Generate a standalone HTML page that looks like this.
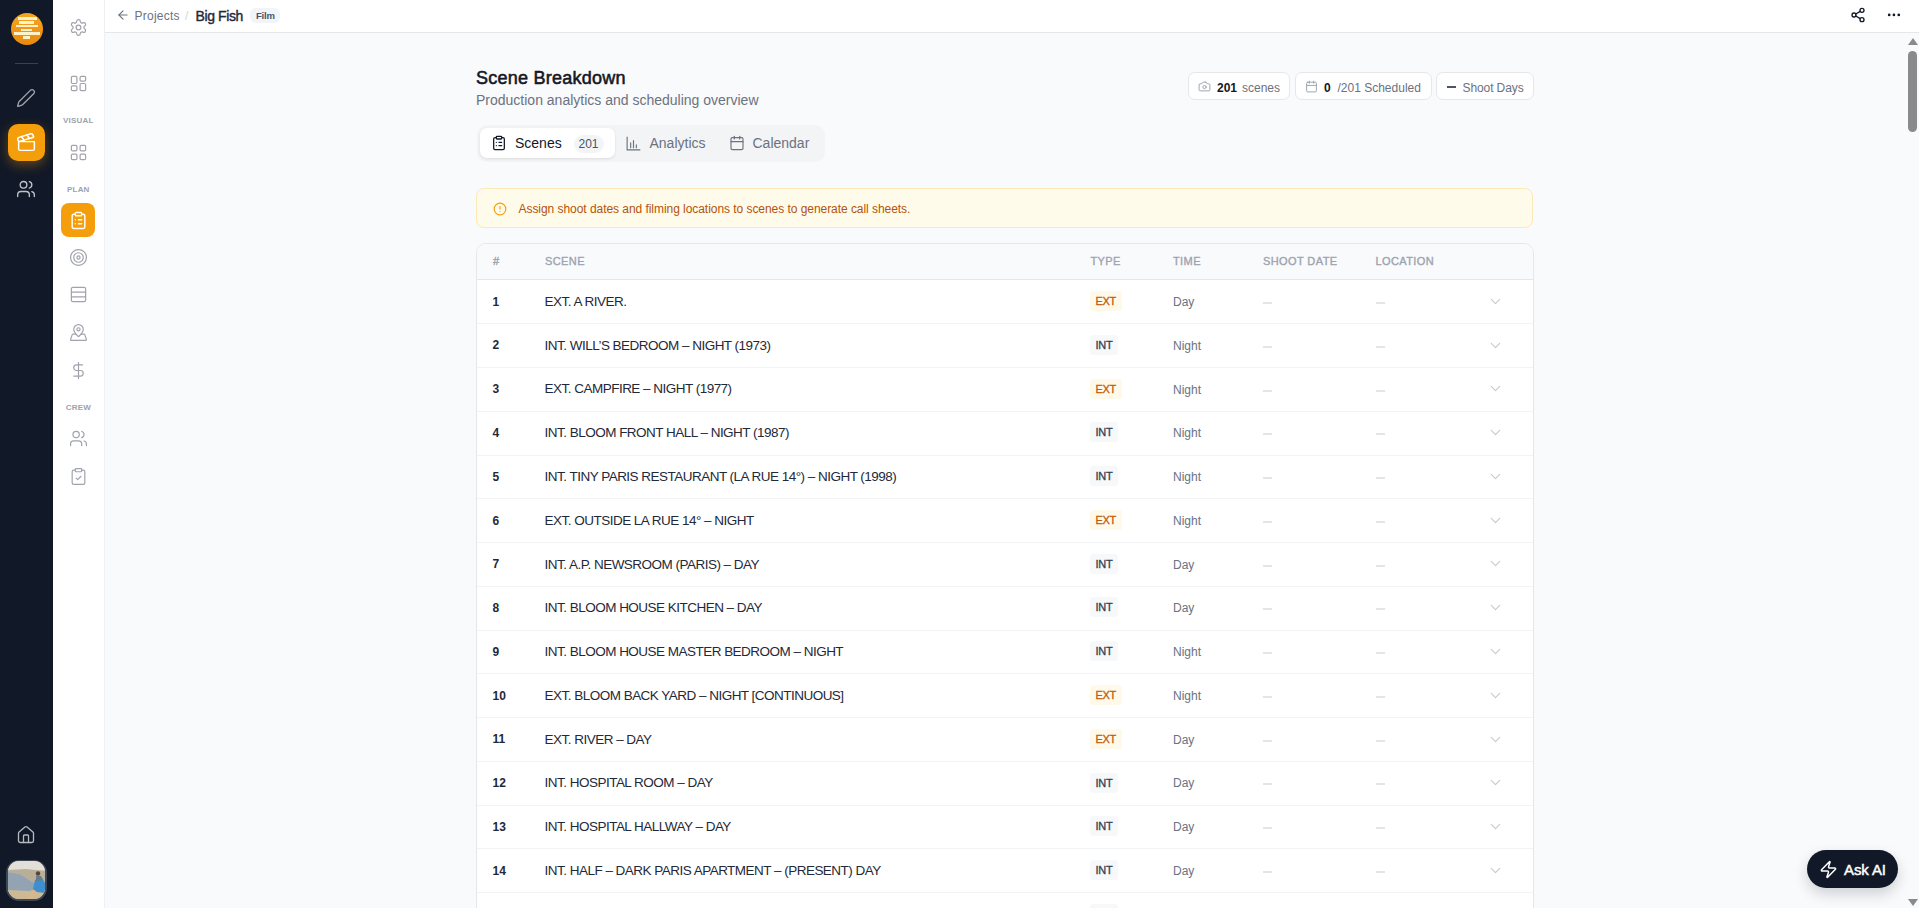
<!DOCTYPE html>
<html><head><meta charset="utf-8">
<style>
*{box-sizing:border-box;margin:0;padding:0}
html,body{width:1919px;height:908px;overflow:hidden;background:#F9FAFB;font-family:"Liberation Sans",sans-serif;color:#111827}
.abs{position:absolute}
svg{display:block}
.ic{position:absolute}
#rail{left:0;top:0;width:53px;height:908px;background:#111827}
#side{left:53px;top:0;width:52px;height:908px;background:#fff;border-right:1px solid #EEF0F3}
#top{left:105px;top:0;width:1814px;height:33px;background:#fff;border-bottom:1px solid #E5E7EB}
.lbl{position:absolute;width:52px;left:-0.7px;text-align:center;font-size:8px;font-weight:bold;color:#9CA3AF;letter-spacing:0.2px;line-height:10px}
.t{position:absolute;white-space:nowrap;line-height:1}
.pill{position:absolute;top:39px;height:27.6px;background:#fff;border:1px solid #E5E7EB;border-radius:7px}
.row{position:absolute;left:0;width:1055px;height:43.8px;border-top:1px solid #F1F3F5;background:#fff}
.row .n{position:absolute;left:16px;top:0;line-height:43.8px;font-size:12px;font-weight:bold;color:#1F2937}
.row .s{position:absolute;left:68px;top:0;line-height:43.8px;font-size:13px;letter-spacing:-0.35px;color:#1F2937;white-space:nowrap}
.row .b{position:absolute;left:613.5px;top:12px;height:20px;line-height:20px;border-radius:4px;font-size:10.5px;font-weight:bold;padding:0 6px;letter-spacing:-0.2px}
.row .b.ext{background:#FEF7E6;color:#C2570C}
.row .b.int{background:#F6F8FA;color:#334155}
.row .tm{position:absolute;left:696.5px;top:0;line-height:43.8px;font-size:12px;color:#6B7280}
.row .d{position:absolute;top:22px;width:9px;height:1px;background:#D9DCE1}
.row .cv{position:absolute;left:1012px;top:15px}
.rn{font-size:12px;font-weight:bold;color:#1F2937}
.rs{font-size:13.5px;letter-spacing:-0.52px;color:#1F2937}
.rb{position:absolute;height:20px;line-height:20px;border-radius:3.5px;font-size:11px;padding:0 5.5px;-webkit-text-stroke:0.3px currentColor;letter-spacing:-0.3px}
.rb.ext{background:#FFF9EA;color:#C25A0C}
.rb.int{background:#F6F8FA;color:#334155}
.rt{font-size:12px;color:#6B7280}
.hd{position:absolute;top:0.7px;line-height:35.5px;font-size:11px;color:#9CA3AF;-webkit-text-stroke:0.35px #9CA3AF;letter-spacing:0.4px}
</style></head><body>

<div id="rail" class="abs">
<div class="abs" style="left:10.8px;top:12.7px;width:32px;height:32px;border-radius:50%;background:linear-gradient(180deg,#F5A623 0%,#EF9416 60%,#E88A0E 100%)"></div>
<div class="abs" style="left:17.6px;top:17.45px;width:19.1px;height:2.4px;background:#FFF1C8"></div>
<div class="abs" style="left:19.4px;top:21.2px;width:14.600000000000001px;height:2.4px;background:#FFF1C8"></div>
<div class="abs" style="left:15.9px;top:24.900000000000002px;width:22.1px;height:2.4px;background:#FFF1C8"></div>
<div class="abs" style="left:21.4px;top:28.6px;width:10.600000000000001px;height:2.4px;background:#FFF1C8"></div>
<div class="abs" style="left:13.9px;top:32.3px;width:26.0px;height:2.4px;background:#FFF1C8"></div>
<div class="abs" style="left:23px;top:36.3px;width:7.300000000000001px;height:2.4px;background:#FFF1C8"></div>
<div class="abs" style="left:15px;top:62.5px;width:23px;height:1px;background:#374151"></div>
<div class="ic" style="left:16.0px;top:88.0px;width:20px;height:20px"><svg width="20" height="20" viewBox="0 0 24 24" fill="none" stroke="#A0A3AB" stroke-width="1.6" stroke-linecap="round" stroke-linejoin="round" ><path d="M21.174 6.812a1 1 0 0 0-3.986-3.987L3.842 16.174a2 2 0 0 0-.5.83l-1.321 4.352a.5.5 0 0 0 .623.622l4.353-1.32a2 2 0 0 0 .83-.497z"/></svg></div>
<div class="abs" style="left:8.2px;top:124px;width:37px;height:37px;border-radius:10px;background:#F59E0B;box-shadow:0 4px 12px rgba(245,158,11,0.35)"></div>
<div class="ic" style="left:15.5px;top:132.0px;width:21px;height:21px"><svg width="21" height="21" viewBox="0 0 24 24" fill="none" stroke="#fff" stroke-width="1.7" stroke-linecap="round" stroke-linejoin="round" ><path d="M20.2 6 3 11l-.9-2.4c-.3-1.1.3-2.2 1.3-2.5l13.5-4c1.1-.3 2.2.3 2.5 1.3Z"/><path d="m6.2 5.3 3.1 3.9"/><path d="m12.4 3.4 3.1 4"/><path d="M3 11h18v8a2 2 0 0 1-2 2H5a2 2 0 0 1-2-2Z"/></svg></div>
<div class="ic" style="left:16.0px;top:178.5px;width:20px;height:20px"><svg width="20" height="20" viewBox="0 0 24 24" fill="none" stroke="#C0C3CA" stroke-width="1.6" stroke-linecap="round" stroke-linejoin="round" ><path d="M16 21v-2a4 4 0 0 0-4-4H6a4 4 0 0 0-4 4v2"/><circle cx="9" cy="7" r="4"/><path d="M22 21v-2a4 4 0 0 0-3-3.87"/><path d="M16 3.13a4 4 0 0 1 0 7.75"/></svg></div>
<div class="ic" style="left:16.0px;top:825.0px;width:20px;height:20px"><svg width="20" height="20" viewBox="0 0 24 24" fill="none" stroke="#B6B9C0" stroke-width="1.6" stroke-linecap="round" stroke-linejoin="round" ><path d="M15 21v-8a1 1 0 0 0-1-1h-4a1 1 0 0 0-1 1v8"/><path d="M3 10a2 2 0 0 1 .709-1.528l7-5.999a2 2 0 0 1 2.582 0l7 5.999A2 2 0 0 1 21 10v9a2 2 0 0 1-2 2H5a2 2 0 0 1-2-2z"/></svg></div>
<div class="abs" style="left:6px;top:859.5px;width:41px;height:41px;border-radius:13px;background:#3F4654"></div>
<svg class="abs" style="left:8px;top:861px" width="37" height="38" viewBox="0 0 37 38"><defs><clipPath id="av"><rect x="0" y="0" width="37" height="38" rx="11"/></clipPath></defs><g clip-path="url(#av)"><rect width="37" height="38" fill="#CFCBC2"/><rect width="37" height="9" fill="#E2DFD8"/><path d="M0 9 L18 8 L37 10 L37 24 L26 22 L12 13 L0 11Z" fill="#B9AE98"/><path d="M0 11 L12 13 L26 22 L30 27 L22 30 L0 31Z" fill="#93A3B1"/><path d="M0 29 L22 30 L30 27 L37 28 L37 38 L0 38Z" fill="#CDB993"/><path d="M24 30 L28 28 L25 38 L20 38Z" fill="#D9B78F"/><path d="M27 19 L34 17 L37 22 L37 32 L29 31 L25 28Z" fill="#3D8FCF"/><circle cx="30" cy="12.5" r="2.2" fill="#5A4535"/><path d="M28 15 L33 15 L35 19 L28 20Z" fill="#6C7A88"/></g></svg>
</div>
<div id="side" class="abs">
<div class="ic" style="left:15.5px;top:17.5px;width:19px;height:19px"><svg width="19" height="19" viewBox="0 0 24 24" fill="none" stroke="#A0A3AB" stroke-width="1.5" stroke-linecap="round" stroke-linejoin="round" ><path d="M12.22 2h-.44a2 2 0 0 0-2 2v.18a2 2 0 0 1-1 1.73l-.43.25a2 2 0 0 1-2 0l-.15-.08a2 2 0 0 0-2.73.73l-.22.38a2 2 0 0 0 .73 2.73l.15.1a2 2 0 0 1 1 1.72v.51a2 2 0 0 1-1 1.74l-.15.09a2 2 0 0 0-.73 2.73l.22.38a2 2 0 0 0 2.73.73l.15-.08a2 2 0 0 1 2 0l.43.25a2 2 0 0 1 1 1.73V20a2 2 0 0 0 2 2h.44a2 2 0 0 0 2-2v-.18a2 2 0 0 1 1-1.73l.43-.25a2 2 0 0 1 2 0l.15.08a2 2 0 0 0 2.73-.73l.22-.39a2 2 0 0 0-.73-2.73l-.15-.08a2 2 0 0 1-1-1.74v-.5a2 2 0 0 1 1-1.74l.15-.09a2 2 0 0 0 .73-2.73l-.22-.38a2 2 0 0 0-2.73-.73l-.15.08a2 2 0 0 1-2 0l-.43-.25a2 2 0 0 1-1-1.73V4a2 2 0 0 0-2-2z"/><circle cx="12" cy="12" r="3"/></svg></div>
<div class="ic" style="left:15.5px;top:73.5px;width:19px;height:19px"><svg width="19" height="19" viewBox="0 0 24 24" fill="none" stroke="#A0A3AB" stroke-width="1.5" stroke-linecap="round" stroke-linejoin="round" ><rect x="3" y="3" width="7" height="9" rx="1.5"/><rect x="14" y="3" width="7" height="6" rx="1.5"/><rect x="14" y="12" width="7" height="9" rx="1.5"/><rect x="3" y="15" width="7" height="6" rx="1.5"/></svg></div>
<div class="lbl" style="top:116px">VISUAL</div>
<div class="ic" style="left:15.5px;top:142.5px;width:19px;height:19px"><svg width="19" height="19" viewBox="0 0 24 24" fill="none" stroke="#A0A3AB" stroke-width="1.5" stroke-linecap="round" stroke-linejoin="round" ><rect x="3" y="3" width="7" height="7" rx="1.5"/><rect x="14" y="3" width="7" height="7" rx="1.5"/><rect x="14" y="14" width="7" height="7" rx="1.5"/><rect x="3" y="14" width="7" height="7" rx="1.5"/></svg></div>
<div class="lbl" style="top:185px">PLAN</div>
<div class="abs" style="left:8px;top:203px;width:34px;height:34px;border-radius:8px;background:#F59E0B"></div>
<div class="ic" style="left:15.5px;top:210.5px;width:19px;height:19px"><svg width="19" height="19" viewBox="0 0 24 24" fill="none" stroke="#fff" stroke-width="1.8" stroke-linecap="round" stroke-linejoin="round" ><rect x="8" y="2" width="8" height="4" rx="1"/><path d="M16 4h2a2 2 0 0 1 2 2v14a2 2 0 0 1-2 2H6a2 2 0 0 1-2-2V6a2 2 0 0 1 2-2h2"/><path d="M12 11h4"/><path d="M12 16h4"/><path d="M8 11h.01"/><path d="M8 16h.01"/></svg></div>
<div class="ic" style="left:15.5px;top:247.5px;width:19px;height:19px"><svg width="19" height="19" viewBox="0 0 24 24" fill="none" stroke="#A0A3AB" stroke-width="1.5" stroke-linecap="round" stroke-linejoin="round" ><circle cx="12" cy="12" r="10"/><circle cx="12" cy="12" r="6"/><circle cx="12" cy="12" r="2"/></svg></div>
<div class="ic" style="left:15.5px;top:285.0px;width:19px;height:19px"><svg width="19" height="19" viewBox="0 0 24 24" fill="none" stroke="#A0A3AB" stroke-width="1.5" stroke-linecap="round" stroke-linejoin="round" ><rect x="3" y="3" width="18" height="18" rx="2"/><path d="M21 9H3"/><path d="M21 15H3"/></svg></div>
<div class="ic" style="left:15.5px;top:322.5px;width:19px;height:19px"><svg width="19" height="19" viewBox="0 0 24 24" fill="none" stroke="#A0A3AB" stroke-width="1.5" stroke-linecap="round" stroke-linejoin="round" ><path d="M18 8c0 3.613-3.869 7.429-5.393 8.795a1 1 0 0 1-1.214 0C9.87 15.429 6 11.613 6 8a6 6 0 0 1 12 0"/><circle cx="12" cy="8" r="2"/><path d="M8.714 14h-3.71a1 1 0 0 0-.948.683l-2.004 6A1 1 0 0 0 3 22h18a1 1 0 0 0 .948-1.316l-2-6a1 1 0 0 0-.949-.684h-3.712"/></svg></div>
<div class="ic" style="left:15.5px;top:360.5px;width:19px;height:19px"><svg width="19" height="19" viewBox="0 0 24 24" fill="none" stroke="#A0A3AB" stroke-width="1.5" stroke-linecap="round" stroke-linejoin="round" ><line x1="12" x2="12" y1="2" y2="22"/><path d="M17 5H9.5a3.5 3.5 0 0 0 0 7h5a3.5 3.5 0 0 1 0 7H6"/></svg></div>
<div class="lbl" style="top:403px">CREW</div>
<div class="ic" style="left:15.5px;top:428.5px;width:19px;height:19px"><svg width="19" height="19" viewBox="0 0 24 24" fill="none" stroke="#A0A3AB" stroke-width="1.5" stroke-linecap="round" stroke-linejoin="round" ><path d="M16 21v-2a4 4 0 0 0-4-4H6a4 4 0 0 0-4 4v2"/><circle cx="9" cy="7" r="4"/><path d="M22 21v-2a4 4 0 0 0-3-3.87"/><path d="M16 3.13a4 4 0 0 1 0 7.75"/></svg></div>
<div class="ic" style="left:15.5px;top:466.5px;width:19px;height:19px"><svg width="19" height="19" viewBox="0 0 24 24" fill="none" stroke="#A0A3AB" stroke-width="1.5" stroke-linecap="round" stroke-linejoin="round" ><rect x="8" y="2" width="8" height="4" rx="1"/><path d="M16 4h2a2 2 0 0 1 2 2v14a2 2 0 0 1-2 2H6a2 2 0 0 1-2-2V6a2 2 0 0 1 2-2h2"/><path d="m9 14 2 2 4-4"/></svg></div>
</div>
<div id="top" class="abs">
<div class="ic" style="left:11.0px;top:8.0px;width:14px;height:14px"><svg width="14" height="14" viewBox="0 0 24 24" fill="none" stroke="#6B7280" stroke-width="1.9" stroke-linecap="round" stroke-linejoin="round" ><path d="m12 19-7-7 7-7"/><path d="M19 12H5"/></svg></div>
<div class="t" style="left:29.5px;top:9.5px;font-size:12px;color:#6B7280;letter-spacing:0.25px">Projects</div>
<div class="t" style="left:80px;top:9.5px;font-size:12px;color:#D1D5DB">/</div>
<div class="t" style="left:90.5px;top:8.5px;font-size:14px;color:#1F2937;-webkit-text-stroke:0.4px #1F2937;letter-spacing:-0.4px">Big Fish</div>
<div class="abs" style="left:145px;top:8px;width:30px;height:15px;border-radius:6px;background:#F1F5F9"></div>
<div class="t" style="left:151px;top:11px;font-size:9.5px;font-weight:bold;color:#475569;letter-spacing:-0.2px">Film</div>
<div class="ic" style="left:1745.0px;top:6.5px;width:16px;height:16px"><svg width="16" height="16" viewBox="0 0 24 24" fill="none" stroke="#111827" stroke-width="2" stroke-linecap="round" stroke-linejoin="round" ><circle cx="18" cy="5" r="3"/><circle cx="6" cy="12" r="3"/><circle cx="18" cy="19" r="3"/><line x1="8.59" x2="15.42" y1="13.51" y2="17.49"/><line x1="15.41" x2="8.59" y1="6.51" y2="10.49"/></svg></div>
<svg class="abs" style="left:1781px;top:9px" width="20" height="12" viewBox="0 0 20 12"><circle cx="3.2" cy="5.9" r="1.35" fill="#111827"/><circle cx="7.9" cy="5.9" r="1.35" fill="#111827"/><circle cx="12.8" cy="5.9" r="1.35" fill="#111827"/></svg>
</div>
<div class="abs" style="left:476px;top:33px;width:1057px;height:875px">
<div class="t" style="left:0;top:36px;font-size:18px;color:#111827;-webkit-text-stroke:0.55px #111827;letter-spacing:0.25px">Scene Breakdown</div>
<div class="t" style="left:0;top:60px;font-size:14px;color:#6B7280">Production analytics and scheduling overview</div>
<div class="abs" style="left:1px;top:91.5px;width:348px;height:37px;border-radius:10px;background:#F2F4F6"></div>
<div class="abs" style="left:4px;top:95px;width:135px;height:30px;border-radius:7px;background:#fff;box-shadow:0 1px 3px rgba(0,0,0,0.10)"></div>
<div class="ic" style="left:15.0px;top:102.0px;width:16px;height:16px"><svg width="16" height="16" viewBox="0 0 24 24" fill="none" stroke="#111827" stroke-width="1.9" stroke-linecap="round" stroke-linejoin="round" ><rect x="8" y="2" width="8" height="4" rx="1"/><path d="M16 4h2a2 2 0 0 1 2 2v14a2 2 0 0 1-2 2H6a2 2 0 0 1-2-2V6a2 2 0 0 1 2-2h2"/><path d="M12 11h4"/><path d="M12 16h4"/><path d="M8 11h.01"/><path d="M8 16h.01"/></svg></div>
<div class="t" style="left:39px;top:102.8px;font-size:14px;color:#111827">Scenes</div>
<div class="abs" style="left:97.5px;top:101.5px;width:30px;height:18px;border-radius:9px;background:#F3F4F6"></div>
<div class="t" style="left:102.5px;top:105px;font-size:12px;color:#4B5563">201</div>
<div class="ic" style="left:149.0px;top:101.5px;width:17px;height:17px"><svg width="17" height="17" viewBox="0 0 24 24" fill="none" stroke="#6B7280" stroke-width="1.6" stroke-linecap="round" stroke-linejoin="round" ><path d="M3 3v18h18"/><path d="M8 18V11"/><path d="M12 18V8"/><path d="M16 18v-4"/></svg></div>
<div class="t" style="left:173.5px;top:102.8px;font-size:14px;color:#6B7280">Analytics</div>
<div class="ic" style="left:253.0px;top:102.0px;width:16px;height:16px"><svg width="16" height="16" viewBox="0 0 24 24" fill="none" stroke="#6B7280" stroke-width="1.7" stroke-linecap="round" stroke-linejoin="round" ><rect width="18" height="18" x="3" y="4" rx="2"/><path d="M16 2v4"/><path d="M8 2v4"/><path d="M3 10h18"/></svg></div>
<div class="t" style="left:276.5px;top:102.8px;font-size:14px;color:#6B7280">Calendar</div>
<div class="pill" style="left:712px;width:102px"></div>
<div class="ic" style="left:722.0px;top:47.0px;width:13px;height:13px"><svg width="13" height="13" viewBox="0 0 24 24" fill="none" stroke="#9CA3AF" stroke-width="1.8" stroke-linecap="round" stroke-linejoin="round" ><path d="M14.5 4h-5L7 7H4a2 2 0 0 0-2 2v9a2 2 0 0 0 2 2h16a2 2 0 0 0 2-2V9a2 2 0 0 0-2-2h-3l-2.5-3z"/><circle cx="12" cy="13" r="3"/></svg></div>
<div class="t" style="left:741px;top:48.5px;font-size:12px;font-weight:bold;color:#111827">201</div>
<div class="t" style="left:766px;top:48.5px;font-size:12px;color:#6B7280">scenes</div>
<div class="pill" style="left:818.5px;width:137px"></div>
<div class="ic" style="left:829.0px;top:47.0px;width:13px;height:13px"><svg width="13" height="13" viewBox="0 0 24 24" fill="none" stroke="#9CA3AF" stroke-width="1.8" stroke-linecap="round" stroke-linejoin="round" ><rect width="18" height="18" x="3" y="4" rx="2"/><path d="M16 2v4"/><path d="M8 2v4"/><path d="M3 10h18"/></svg></div>
<div class="t" style="left:848px;top:48.5px;font-size:12px;font-weight:bold;color:#111827">0</div>
<div class="t" style="left:861.5px;top:48.5px;font-size:12px;color:#6B7280">/201 Scheduled</div>
<div class="pill" style="left:960px;width:98px"></div>
<div class="abs" style="left:970.5px;top:53px;width:9px;height:1.6px;background:#4B5563"></div>
<div class="t" style="left:986.5px;top:48.5px;font-size:12px;color:#6B7280;letter-spacing:-0.1px">Shoot Days</div>
<div class="abs" style="left:0;top:155px;width:1057px;height:40px;border-radius:8px;background:#FFFBEB;border:1px solid #FDE9B5"></div>
<div class="ic" style="left:16.5px;top:168.8px;width:14px;height:14px"><svg width="14" height="14" viewBox="0 0 24 24" fill="none" stroke="#F59E0B" stroke-width="2" stroke-linecap="round" stroke-linejoin="round" ><circle cx="12" cy="12" r="10"/><line x1="12" x2="12" y1="8" y2="12"/><line x1="12" x2="12.01" y1="16" y2="16"/></svg></div>
<div class="t" style="left:42.5px;top:169.5px;font-size:12px;color:#B45309;letter-spacing:-0.05px">Assign shoot dates and filming locations to scenes to generate call sheets.</div>
</div>
<div class="abs" style="left:476px;top:242.6px;width:1058px;height:700px;border-radius:10px;border:1px solid #E5E7EB;background:#fff;overflow:hidden">
<div class="abs" style="left:0;top:0;width:1056px;height:36.4px;background:#F9FAFB;border-bottom:1px solid #E5E7EB"></div>
<div class="hd" style="left:16px">#</div>
<div class="hd" style="left:68px">SCENE</div>
<div class="hd" style="left:613.5px">TYPE</div>
<div class="hd" style="left:696px">TIME</div>
<div class="hd" style="left:786px">SHOOT DATE</div>
<div class="hd" style="left:898.5px">LOCATION</div>
</div>
<div class="abs" style="left:477px;top:323.20px;width:1056px;height:1px;background:#F1F3F5"></div>
<div class="t rn" style="left:492.5px;top:295.70px">1</div>
<div class="t rs" style="left:544.6px;top:294.90px">EXT. A RIVER.</div>
<div class="rb ext" style="left:1090px;top:291.10px">EXT</div>
<div class="t rt" style="left:1173px;top:296.00px">Day</div>
<div class="abs" style="left:1263px;top:302px;width:9px;height:2px;background:#E3E5E8"></div>
<div class="abs" style="left:1375.5px;top:302px;width:9px;height:2px;background:#E3E5E8"></div>
<div class="ic" style="left:1487.2px;top:292.8px;width:17px;height:17px"><svg width="17" height="17" viewBox="0 0 24 24" fill="none" stroke="#C4C8CE" stroke-width="1.5" stroke-linecap="round" stroke-linejoin="round" ><path d="m6 9 6 6 6-6"/></svg></div>
<div class="abs" style="left:477px;top:366.97px;width:1056px;height:1px;background:#F1F3F5"></div>
<div class="t rn" style="left:492.5px;top:339.47px">2</div>
<div class="t rs" style="left:544.6px;top:338.67px">INT. WILL’S BEDROOM – NIGHT (1973)</div>
<div class="rb int" style="left:1090px;top:334.87px">INT</div>
<div class="t rt" style="left:1173px;top:339.77px">Night</div>
<div class="abs" style="left:1263px;top:346px;width:9px;height:2px;background:#E3E5E8"></div>
<div class="abs" style="left:1375.5px;top:346px;width:9px;height:2px;background:#E3E5E8"></div>
<div class="ic" style="left:1487.2px;top:336.57px;width:17px;height:17px"><svg width="17" height="17" viewBox="0 0 24 24" fill="none" stroke="#C4C8CE" stroke-width="1.5" stroke-linecap="round" stroke-linejoin="round" ><path d="m6 9 6 6 6-6"/></svg></div>
<div class="abs" style="left:477px;top:410.74px;width:1056px;height:1px;background:#F1F3F5"></div>
<div class="t rn" style="left:492.5px;top:383.24px">3</div>
<div class="t rs" style="left:544.6px;top:382.44px">EXT. CAMPFIRE – NIGHT (1977)</div>
<div class="rb ext" style="left:1090px;top:378.64px">EXT</div>
<div class="t rt" style="left:1173px;top:383.54px">Night</div>
<div class="abs" style="left:1263px;top:390px;width:9px;height:2px;background:#E3E5E8"></div>
<div class="abs" style="left:1375.5px;top:390px;width:9px;height:2px;background:#E3E5E8"></div>
<div class="ic" style="left:1487.2px;top:380.34000000000003px;width:17px;height:17px"><svg width="17" height="17" viewBox="0 0 24 24" fill="none" stroke="#C4C8CE" stroke-width="1.5" stroke-linecap="round" stroke-linejoin="round" ><path d="m6 9 6 6 6-6"/></svg></div>
<div class="abs" style="left:477px;top:454.51px;width:1056px;height:1px;background:#F1F3F5"></div>
<div class="t rn" style="left:492.5px;top:427.01px">4</div>
<div class="t rs" style="left:544.6px;top:426.21px">INT. BLOOM FRONT HALL – NIGHT (1987)</div>
<div class="rb int" style="left:1090px;top:422.41px">INT</div>
<div class="t rt" style="left:1173px;top:427.31px">Night</div>
<div class="abs" style="left:1263px;top:433px;width:9px;height:2px;background:#E3E5E8"></div>
<div class="abs" style="left:1375.5px;top:433px;width:9px;height:2px;background:#E3E5E8"></div>
<div class="ic" style="left:1487.2px;top:424.11px;width:17px;height:17px"><svg width="17" height="17" viewBox="0 0 24 24" fill="none" stroke="#C4C8CE" stroke-width="1.5" stroke-linecap="round" stroke-linejoin="round" ><path d="m6 9 6 6 6-6"/></svg></div>
<div class="abs" style="left:477px;top:498.28px;width:1056px;height:1px;background:#F1F3F5"></div>
<div class="t rn" style="left:492.5px;top:470.78px">5</div>
<div class="t rs" style="left:544.6px;top:469.98px">INT. TINY PARIS RESTAURANT (LA RUE 14°) – NIGHT (1998)</div>
<div class="rb int" style="left:1090px;top:466.18px">INT</div>
<div class="t rt" style="left:1173px;top:471.08px">Night</div>
<div class="abs" style="left:1263px;top:477px;width:9px;height:2px;background:#E3E5E8"></div>
<div class="abs" style="left:1375.5px;top:477px;width:9px;height:2px;background:#E3E5E8"></div>
<div class="ic" style="left:1487.2px;top:467.88px;width:17px;height:17px"><svg width="17" height="17" viewBox="0 0 24 24" fill="none" stroke="#C4C8CE" stroke-width="1.5" stroke-linecap="round" stroke-linejoin="round" ><path d="m6 9 6 6 6-6"/></svg></div>
<div class="abs" style="left:477px;top:542.05px;width:1056px;height:1px;background:#F1F3F5"></div>
<div class="t rn" style="left:492.5px;top:514.55px">6</div>
<div class="t rs" style="left:544.6px;top:513.75px">EXT. OUTSIDE LA RUE 14° – NIGHT</div>
<div class="rb ext" style="left:1090px;top:509.95px">EXT</div>
<div class="t rt" style="left:1173px;top:514.85px">Night</div>
<div class="abs" style="left:1263px;top:521px;width:9px;height:2px;background:#E3E5E8"></div>
<div class="abs" style="left:1375.5px;top:521px;width:9px;height:2px;background:#E3E5E8"></div>
<div class="ic" style="left:1487.2px;top:511.6500000000001px;width:17px;height:17px"><svg width="17" height="17" viewBox="0 0 24 24" fill="none" stroke="#C4C8CE" stroke-width="1.5" stroke-linecap="round" stroke-linejoin="round" ><path d="m6 9 6 6 6-6"/></svg></div>
<div class="abs" style="left:477px;top:585.82px;width:1056px;height:1px;background:#F1F3F5"></div>
<div class="t rn" style="left:492.5px;top:558.32px">7</div>
<div class="t rs" style="left:544.6px;top:557.52px">INT. A.P. NEWSROOM (PARIS) – DAY</div>
<div class="rb int" style="left:1090px;top:553.72px">INT</div>
<div class="t rt" style="left:1173px;top:558.62px">Day</div>
<div class="abs" style="left:1263px;top:565px;width:9px;height:2px;background:#E3E5E8"></div>
<div class="abs" style="left:1375.5px;top:565px;width:9px;height:2px;background:#E3E5E8"></div>
<div class="ic" style="left:1487.2px;top:555.4200000000001px;width:17px;height:17px"><svg width="17" height="17" viewBox="0 0 24 24" fill="none" stroke="#C4C8CE" stroke-width="1.5" stroke-linecap="round" stroke-linejoin="round" ><path d="m6 9 6 6 6-6"/></svg></div>
<div class="abs" style="left:477px;top:629.59px;width:1056px;height:1px;background:#F1F3F5"></div>
<div class="t rn" style="left:492.5px;top:602.09px">8</div>
<div class="t rs" style="left:544.6px;top:601.29px">INT. BLOOM HOUSE KITCHEN – DAY</div>
<div class="rb int" style="left:1090px;top:597.49px">INT</div>
<div class="t rt" style="left:1173px;top:602.39px">Day</div>
<div class="abs" style="left:1263px;top:608px;width:9px;height:2px;background:#E3E5E8"></div>
<div class="abs" style="left:1375.5px;top:608px;width:9px;height:2px;background:#E3E5E8"></div>
<div class="ic" style="left:1487.2px;top:599.19px;width:17px;height:17px"><svg width="17" height="17" viewBox="0 0 24 24" fill="none" stroke="#C4C8CE" stroke-width="1.5" stroke-linecap="round" stroke-linejoin="round" ><path d="m6 9 6 6 6-6"/></svg></div>
<div class="abs" style="left:477px;top:673.36px;width:1056px;height:1px;background:#F1F3F5"></div>
<div class="t rn" style="left:492.5px;top:645.86px">9</div>
<div class="t rs" style="left:544.6px;top:645.06px">INT. BLOOM HOUSE MASTER BEDROOM – NIGHT</div>
<div class="rb int" style="left:1090px;top:641.26px">INT</div>
<div class="t rt" style="left:1173px;top:646.16px">Night</div>
<div class="abs" style="left:1263px;top:652px;width:9px;height:2px;background:#E3E5E8"></div>
<div class="abs" style="left:1375.5px;top:652px;width:9px;height:2px;background:#E3E5E8"></div>
<div class="ic" style="left:1487.2px;top:642.96px;width:17px;height:17px"><svg width="17" height="17" viewBox="0 0 24 24" fill="none" stroke="#C4C8CE" stroke-width="1.5" stroke-linecap="round" stroke-linejoin="round" ><path d="m6 9 6 6 6-6"/></svg></div>
<div class="abs" style="left:477px;top:717.13px;width:1056px;height:1px;background:#F1F3F5"></div>
<div class="t rn" style="left:492.5px;top:689.63px">10</div>
<div class="t rs" style="left:544.6px;top:688.83px">EXT. BLOOM BACK YARD – NIGHT [CONTINUOUS]</div>
<div class="rb ext" style="left:1090px;top:685.03px">EXT</div>
<div class="t rt" style="left:1173px;top:689.93px">Night</div>
<div class="abs" style="left:1263px;top:696px;width:9px;height:2px;background:#E3E5E8"></div>
<div class="abs" style="left:1375.5px;top:696px;width:9px;height:2px;background:#E3E5E8"></div>
<div class="ic" style="left:1487.2px;top:686.73px;width:17px;height:17px"><svg width="17" height="17" viewBox="0 0 24 24" fill="none" stroke="#C4C8CE" stroke-width="1.5" stroke-linecap="round" stroke-linejoin="round" ><path d="m6 9 6 6 6-6"/></svg></div>
<div class="abs" style="left:477px;top:760.90px;width:1056px;height:1px;background:#F1F3F5"></div>
<div class="t rn" style="left:492.5px;top:733.40px">11</div>
<div class="t rs" style="left:544.6px;top:732.60px">EXT. RIVER – DAY</div>
<div class="rb ext" style="left:1090px;top:728.80px">EXT</div>
<div class="t rt" style="left:1173px;top:733.70px">Day</div>
<div class="abs" style="left:1263px;top:740px;width:9px;height:2px;background:#E3E5E8"></div>
<div class="abs" style="left:1375.5px;top:740px;width:9px;height:2px;background:#E3E5E8"></div>
<div class="ic" style="left:1487.2px;top:730.5px;width:17px;height:17px"><svg width="17" height="17" viewBox="0 0 24 24" fill="none" stroke="#C4C8CE" stroke-width="1.5" stroke-linecap="round" stroke-linejoin="round" ><path d="m6 9 6 6 6-6"/></svg></div>
<div class="abs" style="left:477px;top:804.67px;width:1056px;height:1px;background:#F1F3F5"></div>
<div class="t rn" style="left:492.5px;top:777.17px">12</div>
<div class="t rs" style="left:544.6px;top:776.37px">INT. HOSPITAL ROOM – DAY</div>
<div class="rb int" style="left:1090px;top:772.57px">INT</div>
<div class="t rt" style="left:1173px;top:777.47px">Day</div>
<div class="abs" style="left:1263px;top:783px;width:9px;height:2px;background:#E3E5E8"></div>
<div class="abs" style="left:1375.5px;top:783px;width:9px;height:2px;background:#E3E5E8"></div>
<div class="ic" style="left:1487.2px;top:774.27px;width:17px;height:17px"><svg width="17" height="17" viewBox="0 0 24 24" fill="none" stroke="#C4C8CE" stroke-width="1.5" stroke-linecap="round" stroke-linejoin="round" ><path d="m6 9 6 6 6-6"/></svg></div>
<div class="abs" style="left:477px;top:848.44px;width:1056px;height:1px;background:#F1F3F5"></div>
<div class="t rn" style="left:492.5px;top:820.94px">13</div>
<div class="t rs" style="left:544.6px;top:820.14px">INT. HOSPITAL HALLWAY – DAY</div>
<div class="rb int" style="left:1090px;top:816.34px">INT</div>
<div class="t rt" style="left:1173px;top:821.24px">Day</div>
<div class="abs" style="left:1263px;top:827px;width:9px;height:2px;background:#E3E5E8"></div>
<div class="abs" style="left:1375.5px;top:827px;width:9px;height:2px;background:#E3E5E8"></div>
<div class="ic" style="left:1487.2px;top:818.04px;width:17px;height:17px"><svg width="17" height="17" viewBox="0 0 24 24" fill="none" stroke="#C4C8CE" stroke-width="1.5" stroke-linecap="round" stroke-linejoin="round" ><path d="m6 9 6 6 6-6"/></svg></div>
<div class="abs" style="left:477px;top:892.21px;width:1056px;height:1px;background:#F1F3F5"></div>
<div class="t rn" style="left:492.5px;top:864.71px">14</div>
<div class="t rs" style="left:544.6px;top:863.91px">INT. HALF – DARK PARIS APARTMENT – (PRESENT) DAY</div>
<div class="rb int" style="left:1090px;top:860.11px">INT</div>
<div class="t rt" style="left:1173px;top:865.01px">Day</div>
<div class="abs" style="left:1263px;top:871px;width:9px;height:2px;background:#E3E5E8"></div>
<div class="abs" style="left:1375.5px;top:871px;width:9px;height:2px;background:#E3E5E8"></div>
<div class="ic" style="left:1487.2px;top:861.81px;width:17px;height:17px"><svg width="17" height="17" viewBox="0 0 24 24" fill="none" stroke="#C4C8CE" stroke-width="1.5" stroke-linecap="round" stroke-linejoin="round" ><path d="m6 9 6 6 6-6"/></svg></div>
<div class="abs" style="left:477px;top:935.98px;width:1056px;height:1px;background:#F1F3F5"></div>
<div class="t rn" style="left:492.5px;top:908.48px">15</div>
<div class="t rs" style="left:544.6px;top:907.68px">INT. PARIS – DAY</div>
<div class="rb int" style="left:1090px;top:903.88px">INT</div>
<div class="t rt" style="left:1173px;top:908.78px">Day</div>
<div class="abs" style="left:1263px;top:915px;width:9px;height:2px;background:#E3E5E8"></div>
<div class="abs" style="left:1375.5px;top:915px;width:9px;height:2px;background:#E3E5E8"></div>
<div class="ic" style="left:1487.2px;top:905.5800000000002px;width:17px;height:17px"><svg width="17" height="17" viewBox="0 0 24 24" fill="none" stroke="#C4C8CE" stroke-width="1.5" stroke-linecap="round" stroke-linejoin="round" ><path d="m6 9 6 6 6-6"/></svg></div>
<div class="abs" style="left:1904px;top:33px;width:15px;height:875px;background:#F9FAFB"></div>
<div class="abs" style="left:1908px;top:38px;width:0;height:0;border-left:5px solid transparent;border-right:5px solid transparent;border-bottom:7px solid #8A8A8A"></div>
<div class="abs" style="left:1908px;top:51px;width:9px;height:81px;border-radius:4.5px;background:#8A8A8A"></div>
<div class="abs" style="left:1908px;top:899px;width:0;height:0;border-left:5px solid transparent;border-right:5px solid transparent;border-top:7px solid #8A8A8A"></div>
<div class="abs" style="left:1807px;top:850px;width:91px;height:38px;border-radius:19px;background:#111827;box-shadow:0 6px 14px rgba(17,24,39,0.18)"></div>
<div class="ic" style="left:1818.5px;top:859.5px;width:19px;height:19px"><svg width="19" height="19" viewBox="0 0 24 24" fill="none" stroke="#fff" stroke-width="1.9" stroke-linecap="round" stroke-linejoin="round" ><path d="M4 14a1 1 0 0 1-.78-1.63l9.9-10.2a.5.5 0 0 1 .86.46l-1.92 6.02A1 1 0 0 0 13 10h7a1 1 0 0 1 .78 1.63l-9.9 10.2a.5.5 0 0 1-.86-.46l1.92-6.02A1 1 0 0 0 11 14z"/></svg></div>
<div class="t" style="left:1844px;top:862px;font-size:15px;color:#fff;-webkit-text-stroke:0.45px #fff;letter-spacing:-0.1px">Ask AI</div>
</body></html>
